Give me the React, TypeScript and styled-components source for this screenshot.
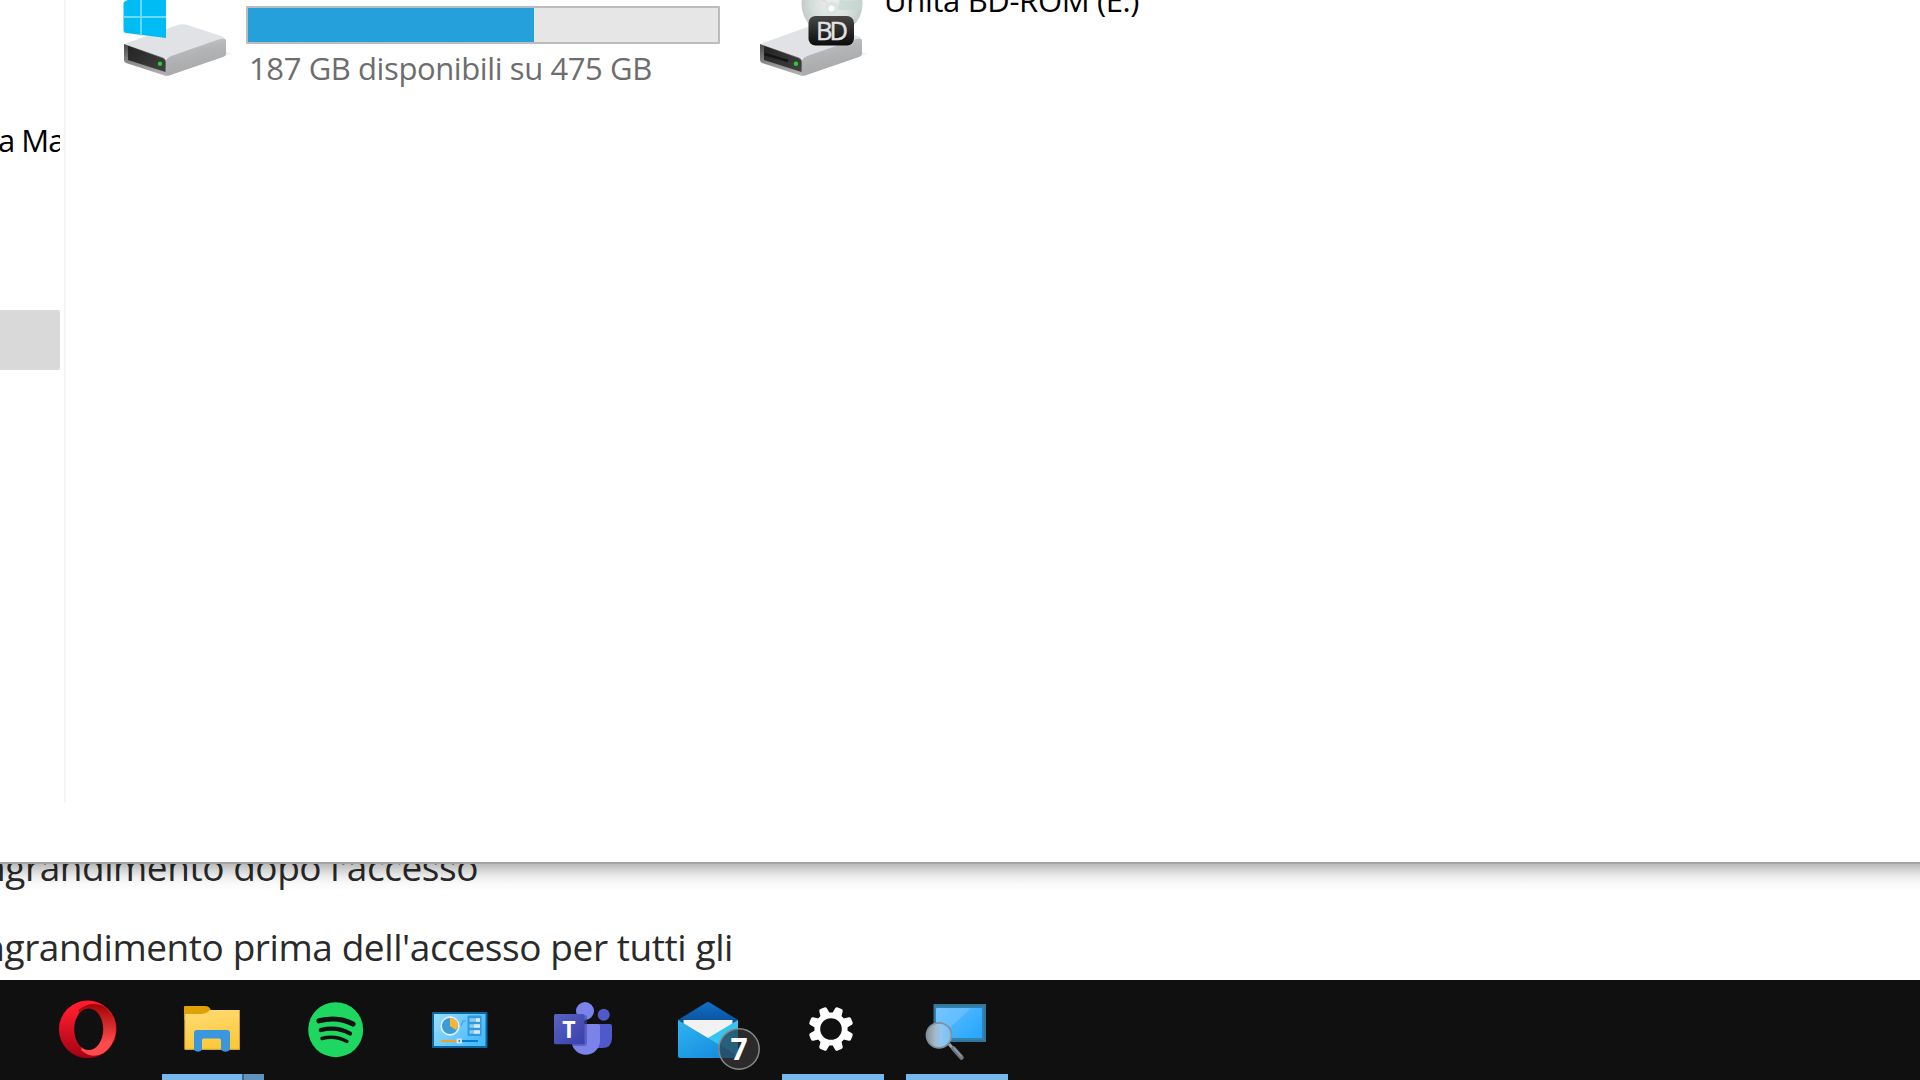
import React from "react";
import styled, { createGlobalStyle } from "styled-components";

const GlobalStyle = createGlobalStyle`
  * { box-sizing: border-box; }
  html, body { margin: 0; padding: 0; background: #fff; overflow: hidden; }
  body { font-family: "Open Sans", "Noto Sans", sans-serif; }
`;

const Screen = styled.div`
  width: 1920px;
  height: 1080px;
  display: grid;
  grid-template-rows: 864px 116px 100px;
  overflow: hidden;
  background: #fff;
`;

const ExplorerWindow = styled.section`
  display: grid;
  grid-template-columns: 60px 1fr;
  background: #fff;
  border-bottom: 2px solid #a3a3a3;
  position: relative;
  z-index: 1;

  &::after {
    content: "";
    position: absolute;
    top: calc(100% + 2px);
    left: 0;
    right: 0;
    height: 28px;
    background: linear-gradient(
      rgba(0, 0, 0, 0.27) 0,
      rgba(0, 0, 0, 0.17) 6px,
      rgba(0, 0, 0, 0.07) 13px,
      rgba(0, 0, 0, 0.02) 20px,
      rgba(0, 0, 0, 0) 28px
    );
  }
`;

const NavPane = styled.nav`
  display: flex;
  flex-direction: column;
  overflow: hidden;
  padding-top: 115px;
`;

const Line = styled.span<{ $size: number; $tracking: number; $color: string; $lh: number }>`
  display: block;
  white-space: pre;
  font-size: ${(p) => p.$size}px;
  line-height: ${(p) => p.$lh}px;
  letter-spacing: ${(p) => p.$tracking}px;
  color: ${(p) => p.$color};
`;

const NavLabel = styled.div`
  height: 50px;
  margin-left: -2px;
`;

const NavSelection = styled.div`
  height: 60px;
  margin-top: 145px;
  background: #d9d9d9;
  border-radius: 0 2px 2px 0;
`;

const Content = styled.main`
  display: flex;
  align-items: flex-start;
  margin-left: 4px;
  height: 803px;
  border-left: 2px solid #f5f5f5;
  padding-left: 54px;
`;

const Drive = styled.article<{ $width: number; $gap: number }>`
  display: flex;
  width: ${(p) => p.$width}px;
  gap: ${(p) => p.$gap}px;
`;

const DriveInfo = styled.div`
  display: flex;
  flex-direction: column;
`;

const Capacity = styled.div`
  width: 474px;
  height: 38px;
  margin: 6px 0 3px;
  border: 2px solid #bcbcbc;
  border-radius: 1px;
  background: #e6e6e6;
`;

const CapacityUsed = styled.div`
  width: 286px;
  height: 100%;
  background: #26a0da;
`;

const CapacityText = styled.div`
  padding-left: 3px;
`;

const DriveTitle = styled.div`
  margin-top: -21px;
`;

const SettingsPage = styled.section`
  display: flex;
  flex-direction: column;
  overflow: hidden;
  background: #fff;
`;

const OptionRow = styled.div<{ $width: number; $shift: number }>`
  display: flex;
  justify-content: flex-end;
  flex: none;
  width: ${(p) => p.$width}px;
  height: 80px;
  margin-top: ${(p) => p.$shift}px;
`;

const Taskbar = styled.footer`
  display: flex;
  gap: 22px;
  padding-left: 38px;
  background: #101010;
`;

const TaskButton = styled.div`
  display: flex;
  flex-direction: column;
  width: 102px;
`;

const Indicator = styled.div<{ $stacked?: boolean }>`
  height: 6px;
  background: ${(p) =>
    p.$stacked
      ? "linear-gradient(90deg, #76b9ed 80px, #42698a 80px 82px, #6192bb 82px)"
      : "#76b9ed"};
`;

const IconBox = styled.svg`
  display: block;
  flex: none;
`;

const DriveBody = ({ slot }: { slot?: boolean }) => (
  <>
    <defs>
      <linearGradient id="side" x1="0" y1="0" x2=".35" y2="1">
        <stop offset="0" stopColor="#cfd0d2" />
        <stop offset=".45" stopColor="#b4b5b7" />
        <stop offset="1" stopColor="#a6a7a9" />
      </linearGradient>
      <linearGradient id="front" x1="0" y1="0" x2="0" y2="1">
        <stop offset="0" stopColor="#4a4a4a" />
        <stop offset="1" stopColor="#b9b9b9" />
      </linearGradient>
      <linearGradient id="panel" x1="0" y1="0" x2="1" y2="1">
        <stop offset="0" stopColor="#232323" />
        <stop offset="1" stopColor="#414141" />
      </linearGradient>
    </defs>
    <path d="M106 52l6 1.500-8 3z" fill="#f2f2f2" />
    <path d="M4 44L56 25.500q5-2 10-1L101 36q5 1.800 5 5L48 59z" fill="#e1e2e6" />
    <path d="M46 60q2-3 8-5L97 40q9-3 9 1v13q0 2-3 3L52 74.500q-4 2-7 1z" fill="url(#side)" />
    <path d="M4 44L43 57.500q3 1 3 4V76L6 63q-2-1-2-3z" fill="url(#front)" />
    <path d="M8 46l35 12.500q2.500 1 2.500 4V72L8 60z" fill="url(#panel)" />
    {slot && <path d="M8.500 54L32 61" stroke="#151515" strokeWidth="2.400" />}
    <circle cx="40" cy="63.700" r="2.200" fill="#2ad02a" />
  </>
);

const SystemDriveIcon = () => (
  <IconBox width="116" height="80" viewBox="0 0 116 80">
    <DriveBody />
    <path d="M3.500 3.500Q3.500 1.500 5.500 1L9-.500H46V38L6 33Q3.500 32.500 3.500 30.500Z" fill="#00bcf5" />
    <path d="M21-1V35.500M3 17H46" stroke="#6cdafa" strokeWidth="1.800" />
  </IconBox>
);

const OpticalDriveIcon = () => (
  <IconBox width="116" height="80" viewBox="0 0 116 80">
    <defs>
      <radialGradient id="disc">
        <stop offset="0" stopColor="#eef2f1" />
        <stop offset=".7" stopColor="#d4dcda" />
        <stop offset="1" stopColor="#c3ccca" />
      </radialGradient>
      <linearGradient id="badge" x1="0" y1="0" x2="0" y2="1">
        <stop offset="0" stopColor="#474747" />
        <stop offset="1" stopColor="#0c0c0c" />
      </linearGradient>
    </defs>
    <DriveBody slot />
    <circle cx="76" cy="4" r="30.500" fill="url(#disc)" />
    <path d="M72 4L50-8 56-16z" fill="#ead2e8" />
    <path d="M81 10h25L106 2 84 0z" fill="#c5d6d0" opacity=".7" />
    <circle cx="75.500" cy="8.500" r="7" fill="#dde5e3" />
    <circle cx="75.500" cy="8.500" r="3" fill="#fff" />
    <rect x="52.500" y="16" width="45.500" height="29.500" rx="7" fill="url(#badge)" />
    <text x="76" y="39.500" textAnchor="middle" fontFamily="Open Sans, sans-serif" fontSize="25.500" fill="#e2e2e2" stroke="#e2e2e2" strokeWidth=".4" textLength="32">BD</text>
  </IconBox>
);

const OperaIcon = () => (
  <g transform="translate(.5 .5)">
    <defs>
      <linearGradient id="opL" x1="0" y1="0" x2="0" y2="1">
        <stop offset=".15" stopColor="#ff1b2d" />
        <stop offset="1" stopColor="#a20214" />
      </linearGradient>
      <linearGradient id="opR" x1="0" y1="0" x2="0" y2="1">
        <stop offset="0" stopColor="#a10305" />
        <stop offset=".75" stopColor="#ff4b4b" />
      </linearGradient>
    </defs>
    <circle cx="49.200" cy="48.800" r="28.800" fill="url(#opL)" />
    <path d="M40 29Q52 20 65 25.500A28.800 28.800 0 0 1 65 72.500Q54 79 43 70Z" fill="url(#opR)" />
    <ellipse cx="50.200" cy="48.800" rx="14.500" ry="20.800" fill="#101010" />
  </g>
);

const FolderIcon = () => (
  <>
    <defs>
      <linearGradient id="folder" x1="0" y1="0" x2=".3" y2="1">
        <stop offset="0" stopColor="#ffdc76" />
        <stop offset="1" stopColor="#fcc93b" />
      </linearGradient>
    </defs>
    <path d="M22 27q0-1 1-1H43q5 0 6 5V40H22z" fill="#e0a107" />
    <path d="M22.500 34H40q4 0 7-3l1-1H77q1 0 1 1V69q0 1-1 1H23.500q-1 0-1-1z" fill="url(#folder)" />
    <path d="M23 69.300H77.500M77.500 31V69M22.700 34V69" stroke="#b98b2c" strokeWidth="1" opacity=".75" />
    <path d="M32 70V53q0-3 3-3H65q3 0 3 3V70q-4.500 3.500-9 0V60q0-1.500-1.500-1.500H41.500Q40 58.500 40 60V70q-4 3.500-8 0z" fill="#3a96dd" />
  </>
);

const SpotifyIcon = () => (
  <>
    <circle cx="49.700" cy="49.700" r="27.500" fill="#1ed760" />
    <g fill="none" stroke="#101010" strokeLinecap="round">
      <path d="M33 40.800Q52 36 67 44" strokeWidth="5.200" />
      <path d="M34.800 50Q51 46 64 53.500" strokeWidth="4.300" />
      <path d="M36 58.500Q49 55 61 61.500" strokeWidth="3.400" />
    </g>
  </>
);

const ControlPanelIcon = () => (
  <>
    <defs>
      <linearGradient id="panelBlue" x1="0" y1="0" x2="1" y2=".5">
        <stop offset="0" stopColor="#98dcff" />
        <stop offset="1" stopColor="#4bbcfb" />
      </linearGradient>
    </defs>
    <rect x="22" y="32" width="55.500" height="36" rx="1" fill="#0b659e" />
    <rect x="24" y="34" width="51.500" height="32" fill="url(#panelBlue)" />
    <circle cx="40" cy="46" r="9.700" fill="#e3eff7" />
    <circle cx="40" cy="46" r="8" fill="#3c9bd8" />
    <path d="M40 46V38A8 8 0 0 1 48 46L46 50z" fill="#fdb62e" />
    <path d="M51 46l2-5h3" fill="none" stroke="#45aae8" strokeWidth="1.500" />
    <rect x="57.500" y="35.500" width="14" height="20.500" rx="1" fill="#2f9bde" />
    <path d="M59.500 40H70M59.500 46H70M59.500 52H70" stroke="#8bc9ee" strokeWidth="3.600" />
    <path d="M66 40h4M64 46h6M64 52h6" stroke="#d8e6e8" strokeWidth="3.600" />
    <path d="M31 61H47" stroke="#f5a11b" strokeWidth="2" />
    <path d="M52 61H68" stroke="#087bd1" strokeWidth="2" />
    <rect x="46.500" y="58.500" width="5.500" height="5" rx="1" fill="#d0e5ed" />
    <circle cx="49.300" cy="61" r="1" fill="#2e8bc4" />
  </>
);

const TeamsIcon = () => (
  <>
    <defs>
      <linearGradient id="teams" x1="0" y1="0" x2="1" y2="1">
        <stop offset="0" stopColor="#5a62c3" />
        <stop offset="1" stopColor="#3940ab" />
      </linearGradient>
    </defs>
    <circle cx="69.700" cy="34.700" r="6" fill="#5059c9" />
    <path d="M62 44H76q2 0 2 2V58q0 10-10 10H62z" fill="#5059c9" />
    <circle cx="51" cy="31" r="9" fill="#7b83eb" />
    <path d="M38 44H64q2 0 2 2V61.500A14.300 14.500 0 0 1 37.500 61.500z" fill="#7b83eb" />
    <path d="M38 35H51q2 0 2 2V63q0 3-3 3H38z" fill="#4048a0" opacity=".55" />
    <rect x="20" y="34" width="30.500" height="30.300" rx="1.500" fill="url(#teams)" />
    <text x="35" y="58" textAnchor="middle" fontFamily="Open Sans, sans-serif" fontWeight="700" fontSize="23" fill="#fff">T</text>
  </>
);

const MailIcon = () => (
  <>
    <defs>
      <linearGradient id="mailL" x1="0" y1="0" x2="1" y2="1">
        <stop offset="0" stopColor="#2eb5ef" />
        <stop offset="1" stopColor="#1285dc" />
      </linearGradient>
      <linearGradient id="flap" x1="0" y1="0" x2="0" y2="1">
        <stop offset="0" stopColor="#0f70c8" />
        <stop offset="1" stopColor="#0b4f97" />
      </linearGradient>
      <clipPath id="envelope">
        <path d="M20 40H80V78H20z" />
      </clipPath>
    </defs>
    <path d="M20 40L48 22.800q2-1.400 4 0L80 40V44H20z" fill="url(#flap)" />
    <path d="M25.500 40H74.500V45L50 60 25.500 44z" fill="#f2f2f2" />
    <path d="M80 40V76q0 2-2 2H40L50 58z" fill="#35c5f3" />
    <path d="M20 40L80 76q-1 2-2 2H22q-2 0-2-2z" fill="url(#mailL)" />
    <circle cx="81" cy="69" r="20.200" fill="#2b2b2b" />
    <circle cx="81" cy="69" r="20.200" fill="#28607a" clipPath="url(#envelope)" />
    <path d="M62 65L80 76V78H63z" fill="#235272" />
    <circle cx="81" cy="69" r="20.200" fill="none" stroke="#878787" strokeWidth="1.500" />
    <text x="81" y="80" textAnchor="middle" fontFamily="Open Sans, sans-serif" fontWeight="700" fontSize="30" fill="#fff">7</text>
  </>
);

const GearIcon = () => (
  <>
    <circle cx="49" cy="49" r="13.700" fill="none" stroke="#fff" strokeWidth="5.800" />
    {[0, 1, 2, 3, 4, 5, 6, 7].map((i) => (
      <path
        key={i}
        d="M44 34.500L45 28q.3-1.500 2-1.500h4q1.700 0 2 1.500L54 34.500z"
        fill="#fff"
        transform={`rotate(${22.5 + i * 45} 49 49)`}
      />
    ))}
  </>
);

const MagnifierIcon = () => (
  <>
    <defs>
      <linearGradient id="screen" x1="0" y1="0" x2="1" y2=".7">
        <stop offset="0" stopColor="#75c5ff" />
        <stop offset=".5" stopColor="#62bdff" />
        <stop offset=".53" stopColor="#46b3ff" />
        <stop offset="1" stopColor="#2ba9fc" />
      </linearGradient>
      <linearGradient id="lens" x1="0" y1="0" x2="1" y2="0">
        <stop offset="0" stopColor="#85909a" />
        <stop offset=".35" stopColor="#a6b9c8" />
        <stop offset=".6" stopColor="#8cc8f3" />
        <stop offset="1" stopColor="#7abff1" />
      </linearGradient>
    </defs>
    <rect x="27.500" y="24" width="52.500" height="38" fill="#34759b" />
    <rect x="29" y="26" width="49" height="34" fill="#3482ae" />
    <rect x="30" y="28" width="46" height="30" rx="1" fill="url(#screen)" />
    <path d="M43 64L47 68.500" stroke="#9ba4aa" strokeWidth="3" />
    <path d="M47.500 68.500L55.500 77.500" stroke="#6c7780" strokeWidth="4.600" strokeLinecap="round" />
    <path d="M48 68L55 76" stroke="#8f9aa3" strokeWidth="1.500" strokeLinecap="round" />
    <circle cx="33" cy="55.300" r="12.500" fill="url(#lens)" stroke="#82909b" strokeWidth="1.700" />
  </>
);

const apps = [
  { name: "opera", Icon: OperaIcon },
  { name: "explorer", Icon: FolderIcon, open: true, stacked: true },
  { name: "spotify", Icon: SpotifyIcon },
  { name: "control", Icon: ControlPanelIcon },
  { name: "teams", Icon: TeamsIcon },
  { name: "mail", Icon: MailIcon },
  { name: "settings", Icon: GearIcon, open: true },
  { name: "magnifier", Icon: MagnifierIcon, open: true },
];

export default function App() {
  return (
    <>
      <GlobalStyle />
      <Screen>
        <ExplorerWindow>
          <NavPane>
            <NavLabel>
              <Line $size={31} $lh={50} $tracking={-1} $color="#000">a Ma</Line>
            </NavLabel>
            <NavSelection />
          </NavPane>
          <Content>
            <Drive $width={636} $gap={10}>
              <SystemDriveIcon />
              <DriveInfo>
                <Capacity>
                  <CapacityUsed />
                </Capacity>
                <CapacityText>
                  <Line $size={31} $lh={42} $tracking={-0.4} $color="#6d6d6d">187 GB disponibili su 475 GB</Line>
                </CapacityText>
              </DriveInfo>
            </Drive>
            <Drive $width={500} $gap={12}>
              <OpticalDriveIcon />
              <DriveTitle>
                <Line $size={31} $lh={42} $tracking={-0.35} $color="#000">Unità BD-ROM (E:)</Line>
              </DriveTitle>
            </Drive>
          </Content>
        </ExplorerWindow>
        <SettingsPage>
          <OptionRow $width={478} $shift={-22}>
            <Line $size={37} $lh={50} $tracking={-0.45} $color="#2a2a2a">ingrandimento dopo l'accesso</Line>
          </OptionRow>
          <OptionRow $width={733} $shift={0}>
            <Line $size={37} $lh={50} $tracking={-0.42} $color="#2a2a2a">ingrandimento prima dell'accesso per tutti gli</Line>
          </OptionRow>
        </SettingsPage>
        <Taskbar>
          {apps.map(({ name, Icon, open, stacked }) => (
            <TaskButton key={name}>
              <IconBox width="102" height="94" viewBox="0 0 102 94">
                <Icon />
              </IconBox>
              {open && <Indicator $stacked={stacked} />}
            </TaskButton>
          ))}
        </Taskbar>
      </Screen>
    </>
  );
}
